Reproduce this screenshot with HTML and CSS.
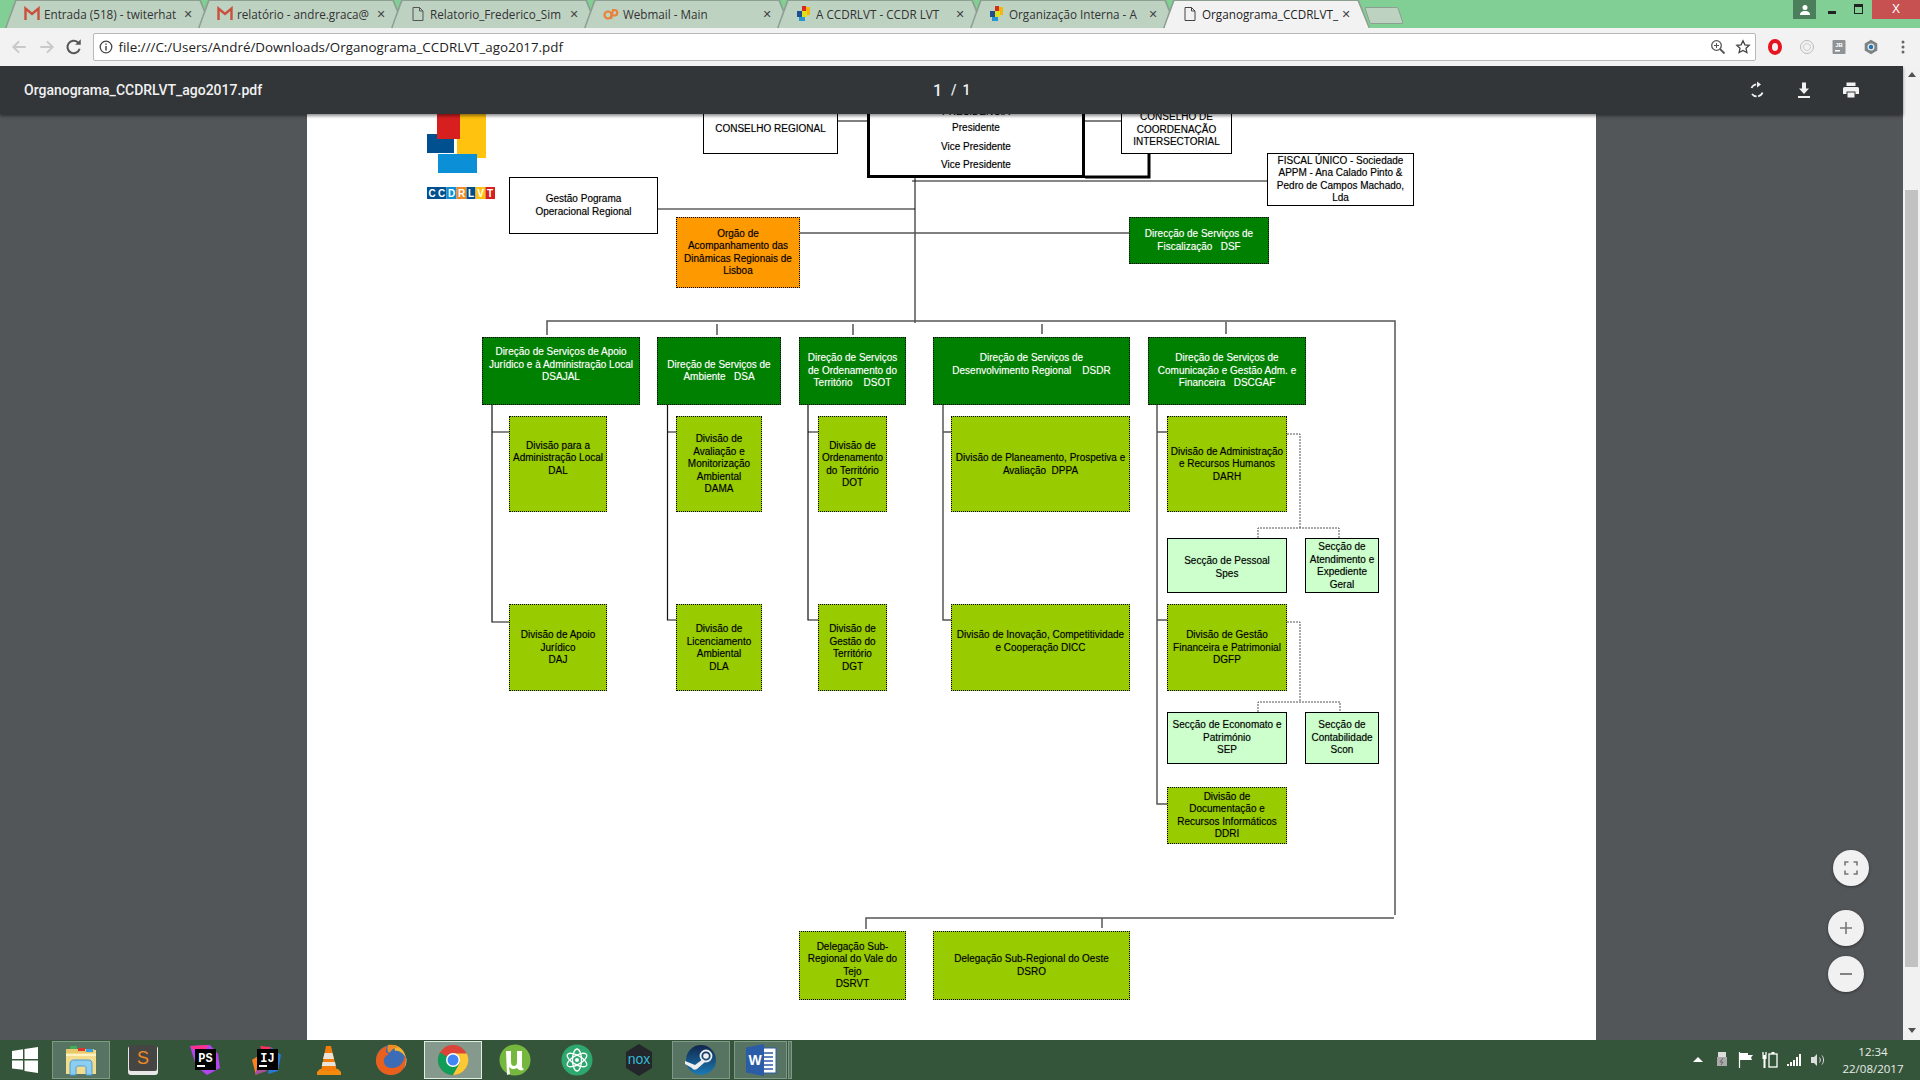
FILE: index.html
```html
<!DOCTYPE html>
<html lang="pt">
<head>
<meta charset="utf-8">
<title>Organograma_CCDRLVT_ago2017.pdf</title>
<link rel="stylesheet" href="styles.css">
</head>
<body>
<div class="app">
  <header class="tabstrip">
    <div class="tab"><svg class="fav" viewBox="0 0 16 16"><path d="M1.5 14V2.5L8 8l6.500-5.500V14" fill="none" stroke="#c9503c" stroke-width="2.400"/></svg><span class="tab-title">Entrada (518) - twiterhat</span><span class="tab-x">✕</span></div>
    <div class="tab"><svg class="fav" viewBox="0 0 16 16"><path d="M1.5 14V2.5L8 8l6.500-5.500V14" fill="none" stroke="#c9503c" stroke-width="2.400"/></svg><span class="tab-title">relatório - andre.graca@</span><span class="tab-x">✕</span></div>
    <div class="tab"><svg class="fav" viewBox="0 0 16 16"><path d="M3 1.500h6.500L13 5v9.500H3zM9.500 1.500V5H13" fill="none" stroke="#555" stroke-width="1"/></svg><span class="tab-title">Relatorio_Frederico_Sim</span><span class="tab-x">✕</span></div>
    <div class="tab"><svg class="fav" viewBox="0 0 16 16"><circle cx="5" cy="9" r="3.500" fill="none" stroke="#e8813c" stroke-width="2.200"/><path d="M8 13l2-9h1.500a2.500 2.500 0 0 1 0 5.500H10" fill="none" stroke="#e8813c" stroke-width="2.200"/></svg><span class="tab-title">Webmail - Main</span><span class="tab-x">✕</span></div>
    <div class="tab"><svg class="fav" viewBox="0 0 16 16"><rect x="6" y="0" width="4" height="5" fill="#d62a1f"/><rect x="10" y="1" width="4" height="8" fill="#f5b50f"/><rect x="1" y="5" width="5" height="6" fill="#1d4f91"/><rect x="6" y="5" width="5" height="6" fill="#dfe01c"/><rect x="3" y="11" width="6" height="4" fill="#2a95d5"/></svg><span class="tab-title">A CCDRLVT - CCDR LVT</span><span class="tab-x">✕</span></div>
    <div class="tab"><svg class="fav" viewBox="0 0 16 16"><rect x="6" y="0" width="4" height="5" fill="#d62a1f"/><rect x="10" y="1" width="4" height="8" fill="#f5b50f"/><rect x="1" y="5" width="5" height="6" fill="#1d4f91"/><rect x="6" y="5" width="5" height="6" fill="#dfe01c"/><rect x="3" y="11" width="6" height="4" fill="#2a95d5"/></svg><span class="tab-title">Organização Interna - A</span><span class="tab-x">✕</span></div>
    <div class="tab tab-active"><svg class="fav" viewBox="0 0 16 16"><path d="M3 1.500h6.500L13 5v9.500H3zM9.500 1.500V5H13" fill="none" stroke="#444" stroke-width="1"/></svg><span class="tab-title">Organograma_CCDRLVT_</span><span class="tab-x">✕</span></div>
    <div class="tab-new"></div>
    <div class="win-controls">
      <div class="win-user"><svg width="12" height="12" viewBox="0 0 12 12"><circle cx="6" cy="3.500" r="2.500" fill="#fff"/><path d="M1 11c0-3 2-4 5-4s5 1 5 4z" fill="#fff"/></svg></div>
      <div class="win-min"></div>
      <div class="win-max"></div>
      <div class="win-close">X</div>
    </div>
  </header>

  <nav class="toolbar">
    <svg class="tb-btn" viewBox="0 0 16 16"><path d="M14 8H3M8 3L3 8l5 5" fill="none" stroke="#c9c9c9" stroke-width="1.800"/></svg>
    <svg class="tb-btn" viewBox="0 0 16 16"><path d="M2 8h11M8 3l5 5-5 5" fill="none" stroke="#c9c9c9" stroke-width="1.800"/></svg>
    <svg class="tb-btn" viewBox="0 0 16 16"><path d="M13 9.500A5.500 5.500 0 1 1 11.500 4" fill="none" stroke="#555" stroke-width="1.800"/><path d="M9 6h5V1z" fill="#555"/></svg>
    <div class="urlbar">
      <svg class="url-info" viewBox="0 0 14 14"><circle cx="7" cy="7" r="5.800" fill="none" stroke="#444" stroke-width="1.300"/><path d="M7 6v4.500M7 3.500v1.300" stroke="#444" stroke-width="1.500"/></svg>
      <span class="url-text">file:///C:/Users/André/Downloads/Organograma_CCDRLVT_ago2017.pdf</span>
      <svg class="url-icon" viewBox="0 0 16 16"><circle cx="6.500" cy="6.500" r="4.800" fill="none" stroke="#555" stroke-width="1.300"/><path d="M10 10l4.500 4.500" stroke="#555" stroke-width="1.800"/><path d="M4 6.500h5M6.500 4v5" stroke="#555"/></svg>
      <svg class="url-icon" viewBox="0 0 16 16"><path d="M8 1.800l1.900 4 4.300.5-3.200 3 .9 4.300L8 11.400l-3.900 2.200.9-4.300-3.200-3 4.300-.5z" fill="none" stroke="#444" stroke-width="1.300"/></svg>
    </div>
    <div class="ext-row">
      <svg class="ext" viewBox="0 0 16 16"><ellipse cx="8" cy="8" rx="5" ry="6" fill="none" stroke="#e5141f" stroke-width="4"/></svg>
      <svg class="ext" viewBox="0 0 16 16"><circle cx="8" cy="8" r="6.500" fill="#f2f2f2" stroke="#bbb"/><circle cx="8" cy="8" r="3.500" fill="none" stroke="#ccc"/></svg>
      <svg class="ext" viewBox="0 0 16 16"><rect x="1.500" y="1" width="13" height="14" rx="1" fill="#8f9396"/><text x="8" y="7.500" class="ext-jb">JB</text><rect x="4" y="11" width="5" height="1.500" fill="#fff"/></svg>
      <svg class="ext" viewBox="0 0 16 16"><path d="M8 .8l6.300 3.600v7.200L8 15.200l-6.300-3.600V4.400z" fill="#7d8285"/><circle cx="8" cy="8" r="3.500" fill="#e8e8e8"/><circle cx="8" cy="8" r="2.200" fill="#1f73b7"/></svg>
      <svg class="ext ext-dots" viewBox="0 0 16 16"><circle cx="8" cy="3" r="1.500" fill="#666"/><circle cx="8" cy="8" r="1.500" fill="#666"/><circle cx="8" cy="13" r="1.500" fill="#666"/></svg>
    </div>
  </nav>

  <main class="main">
    <section class="viewer">
      <div class="pdf-bar">
        <div class="pdf-title">Organograma_CCDRLVT_ago2017.pdf</div>
        <div class="pdf-pages"><span class="pdf-cur">1</span><span class="pdf-sep">/</span><span class="pdf-total">1</span></div>
        <div class="pdf-actions">
          <svg class="pdf-ico" viewBox="0 0 20 20"><path d="M15.500 12.500A6 6 0 0 1 5 14M4.500 8A6 6 0 0 1 12 4.500" fill="none" stroke="#eee" stroke-width="1.800" stroke-dasharray="6 1.500"/><path d="M10 1.500v6l4-3z" fill="#eee"/></svg>
          <svg class="pdf-ico" viewBox="0 0 20 20"><path d="M8 2.500h4v6h3l-5 5.500-5-5.500h3zM4 16h12v2H4z" fill="#f1f1f1"/></svg>
          <svg class="pdf-ico" viewBox="0 0 20 20"><path d="M5.500 2.500h9V6h-9zM3.500 7h13a1.500 1.500 0 0 1 1.500 1.500V14h-3.500v-2.500h-9V14H2V8.500A1.500 1.500 0 0 1 3.500 7zM6.500 12.500h7v5h-7z" fill="#f1f1f1"/></svg>
        </div>
      </div>
      <div class="stage">
        <div class="pdf-page">
          <div class="chart">
            <svg class="wires" viewBox="307 114 1289 926" width="1289" height="926">
              <rect x="427" y="134" width="27" height="19" fill="#004f8f"/>
              <rect x="457" y="100" width="29" height="58" fill="#ffc20e"/>
              <rect x="437" y="100" width="23" height="39" fill="#d71f1f"/>
              <rect x="438" y="154" width="39" height="19" fill="#0b8fd6"/>
              <g class="logo-letters">
                <rect x="427" y="187" width="19.500" height="12" fill="#004f8f"/>
                <rect x="446.500" y="187" width="10" height="12" fill="#0b8fd6"/>
                <rect x="456.500" y="187" width="10" height="12" fill="#ef8a24"/>
                <rect x="466.500" y="187" width="9" height="12" fill="#004f8f"/>
                <rect x="475.500" y="187" width="10" height="12" fill="#ffc20e"/>
                <rect x="485.500" y="187" width="9.500" height="12" fill="#d71f1f"/>
                <text x="432" y="197">C</text><text x="441.500" y="197">C</text><text x="451.500" y="197">D</text><text x="461.500" y="197">R</text><text x="471" y="197">L</text><text x="480.500" y="197">V</text><text x="490" y="197">T</text>
              </g>
              <g class="w-grey">
                <path d="M837 121H868M1085 121H1121M915 177V323M799 233H1129"/>
                <path d="M547 335V321H1395V915M1394 918H866V929M1102 918V928M717 324V335M853 324V335M1042 324V334M1226 322V334"/>
                <path d="M1157 404V804H1167M1157 432H1167M1157 620H1167M943 404V620H951M943 432H951"/>
              </g>
              <g class="w-dark">
                <path d="M912 181H1267M657 209H915"/>
                <path d="M492 404V622H509M492 432H509M667.500 404V620H676M667.500 432H676M808 404V620H818M808 432H818"/>
              </g>
              <path class="w-thick" d="M1149 153V177H1085"/>
              <path class="w-dots" d="M1287 434H1300V528M1258 538V528H1339V538M1287 622H1300V702M1258 712V702H1340V712"/>
            </svg>

            <div class="node plain n-conselho">CONSELHO REGIONAL</div>
            <div class="node n-presid"><div><span class="presid-title">PRESIDÊNCIA</span>Presidente<br>Vice Presidente<br>Vice Presidente</div></div>
            <div class="node plain n-coord">CONSELHO DE<br>COORDENAÇÃO<br>INTERSECTORIAL</div>
            <div class="node plain n-fiscal">FISCAL ÚNICO - Sociedade<br>APPM - Ana Calado Pinto &amp;<br>Pedro de Campos Machado,<br>Lda</div>
            <div class="node plain n-gestao">Gestão Pograma<br>Operacional Regional</div>
            <div class="node orange n-orgao">Orgão de<br>Acompanhamento das<br>Dinâmicas Regionais de<br>Lisboa</div>
            <div class="node green n-dsf">Direcção de Serviços de<br>Fiscalização &nbsp; DSF</div>

            <div class="node green r-dir c-a">Direção de Serviços de Apoio<br>Jurídico e à Administração Local<br>DSAJAL<br>&nbsp;</div>
            <div class="node green r-dir c-b">Direção de Serviços de<br>Ambiente &nbsp; DSA</div>
            <div class="node green r-dir c-c">Direção de Serviços<br>de Ordenamento do<br>Território &nbsp; &nbsp;DSOT</div>
            <div class="node green r-dir c-d">Direção de Serviços de<br>Desenvolvimento Regional &nbsp; &nbsp;DSDR<br>&nbsp;</div>
            <div class="node green r-dir c-e">Direção de Serviços de<br>Comunicação e Gestão Adm. e<br>Financeira &nbsp; DSCGAF</div>

            <div class="node lime r-one d-a">Divisão para a<br>Administração Local<br>DAL<br>&nbsp;</div>
            <div class="node lime r-one d-b">Divisão de<br>Avaliação e<br>Monitorização<br>Ambiental<br>DAMA</div>
            <div class="node lime r-one d-c">Divisão de<br>Ordenamento<br>do Território<br>DOT</div>
            <div class="node lime r-one d-d">Divisão de Planeamento, Prospetiva e<br>Avaliação &nbsp;DPPA</div>
            <div class="node lime r-one d-e">Divisão de Administração<br>e Recursos Humanos<br>DARH</div>

            <div class="node section r-sec1 d-e n-spes">Secção de Pessoal<br>Spes</div>
            <div class="node section r-sec1 d-f">Secção de<br>Atendimento e<br>Expediente<br>Geral</div>

            <div class="node lime r-two d-a">Divisão de Apoio<br>Jurídico<br>DAJ</div>
            <div class="node lime r-two d-b">Divisão de<br>Licenciamento<br>Ambiental<br>DLA</div>
            <div class="node lime r-two d-c">Divisão de<br>Gestão do<br>Território<br>DGT</div>
            <div class="node lime r-two d-d">Divisão de Inovação, Competitividade<br>e Cooperação DICC<br>&nbsp;</div>
            <div class="node lime r-two d-e">Divisão de Gestão<br>Financeira e Patrimonial<br>DGFP</div>

            <div class="node section r-sec2 d-e">Secção de Economato e<br>Património<br>SEP</div>
            <div class="node section r-sec2 d-f">Secção de<br>Contabilidade<br>Scon</div>

            <div class="node lime r-ddri d-e">Divisão de<br>Documentação e<br>Recursos Informáticos<br>DDRI</div>

            <div class="node lime r-del c-c">Delegação Sub-<br>Regional do Vale do<br>Tejo<br>DSRVT</div>
            <div class="node lime r-del c-d">Delegação Sub-Regional do Oeste<br>DSRO</div>
          </div>
        </div>
        <button class="fab fab-fit"><svg width="14" height="14" viewBox="0 0 14 14"><path d="M1 4.500V1h3.500M9.500 1H13v3.500M13 9.500V13H9.500M4.500 13H1V9.500" fill="none" stroke="#777" stroke-width="1.600"/></svg></button>
        <button class="fab fab-plus"><svg width="14" height="14" viewBox="0 0 14 14"><path d="M7 1v12M1 7h12" stroke="#777" stroke-width="1.600"/></svg></button>
        <button class="fab fab-minus"><svg width="14" height="14" viewBox="0 0 14 14"><path d="M1 7h12" stroke="#777" stroke-width="1.800"/></svg></button>
      </div>
    </section>
    <aside class="scrollbar">
      <div class="sb-up"></div>
      <div class="sb-thumb"></div>
      <div class="sb-down"></div>
    </aside>
  </main>

  <footer class="taskbar">
    <div class="start"><svg width="26" height="26" viewBox="0 0 26 26"><path d="M0 4l11-1.800V12H0zM12.500 2L26 0v12H12.500zM0 13.500h11v9.300L0 21.500zM12.500 13.500H26V26l-13.500-2z" fill="#fff"/></svg></div>
    <div class="apps">
      <div class="app-item open"><svg class="app-ico" viewBox="0 0 32 32"><path d="M1 6h30v24H1z" fill="#f4dc8e"/><path d="M1 5h28v4H1z" fill="#e8c869"/><rect x="5" y="2" width="7" height="3" fill="#3fae5b"/><rect x="13" y="4" width="7" height="3" fill="#d33"/><rect x="21" y="5" width="7" height="3" fill="#37a0e6"/><path d="M1 11h30" stroke="#fff3c4" stroke-width="2"/><path d="M5 31V20c0-3 2-4 4-4h14c3 0 4 1 4 4v11h-6v-7c0-1-1-2-2-2h-6c-1 0-2 1-2 2v7z" fill="#8ccdf0" stroke="#4a9cd0"/></svg></div>
      <div class="app-item"><svg class="app-ico" viewBox="0 0 32 32"><rect x="1" y="2" width="30" height="29" rx="3" fill="#e8e8e8"/><rect x="2" y="1" width="28" height="26" rx="2" fill="#454543"/><text x="16" y="20" class="ico-sublime">S</text></svg></div>
      <div class="app-item"><svg class="app-ico" viewBox="0 0 32 32"><path d="M1 2l20-1 8 9 2 14-13 7-11-9z" fill="#b345f1"/><path d="M1 2l18-1-6 12z" fill="#ff318c"/><rect x="6" y="5" width="21" height="21" fill="#000"/><text x="16.500" y="18" class="ico-jb">PS</text><rect x="8" y="21" width="8" height="2" fill="#fff"/></svg></div>
      <div class="app-item"><svg class="app-ico" viewBox="0 0 32 32"><path d="M20 3l10 8-3 16-10 3z" fill="#2979d9"/><path d="M9 2l11 1-5 12z" fill="#fe315d"/><path d="M1 16l6-4 5 13-7 6z" fill="#fc801d"/><path d="M4 31l12-4-8-10z" fill="#a94f9a"/><rect x="6" y="5" width="21" height="21" fill="#000"/><text x="16.500" y="18" class="ico-jb">IJ</text><rect x="8" y="21" width="8" height="2" fill="#fff"/></svg></div>
      <div class="app-item"><svg class="app-ico" viewBox="0 0 32 32"><path d="M4 31v-3l3-3h18l3 3v3z" fill="#f28b0e"/><path d="M13 2h5l6 25H8z" fill="#f47d0a"/><path d="M11.500 9h8l1.500 6H10zM9.500 18h12.500l.8 4H8.800z" fill="#e9e3d8"/></svg></div>
      <div class="app-item"><svg class="app-ico" viewBox="0 0 32 32"><circle cx="16" cy="16" r="15" fill="#3b6cb5"/><path d="M19 1C25 2 30 7 31 14 28 9 24 6 20 7z" fill="#f7b32b"/><path d="M31 13c1 3 .5 8-2 11 1-4 1-8 2-11z" fill="#e8e4d0"/><path d="M12 2C5 4 1 10 1 17c0 8 7 14 15 14s15-6 15-15l-1-5c-1 6-4 13-13 13-6 0-9-4-8-9 1-3 4-4 5-5-3-1-4-3-2-8z" fill="#e8601c"/><path d="M13 1c4-1 9 0 12 3-3-1-6 0-8 2l-3 3c-2-2-2-5-1-8z" fill="#f08a24"/></svg></div>
      <div class="app-item open active"><svg class="app-ico" viewBox="0 0 32 32"><circle cx="16" cy="16" r="15" fill="#db4437"/><path d="M16 16L3 8.500A15 15 0 0 0 16 31l7.500-13z" fill="#109d58"/><path d="M16 9.500h13.800A15 15 0 0 1 16 31l7-12.500z" fill="#fcc934"/><circle cx="16" cy="16" r="7" fill="#fff"/><circle cx="16" cy="16" r="5.500" fill="#4285f4"/></svg></div>
      <div class="app-item"><svg class="app-ico" viewBox="0 0 32 32"><circle cx="16" cy="16" r="15.500" fill="#76b83f"/><path d="M7 7h5v11c0 3 1.500 4 3 4s3-1 3-4V7h5v15c0 2 1 3 2 3-1 2-5 2-7-1-3 2-6 1-8-1l1 7-3 1z" fill="#fff"/></svg></div>
      <div class="app-item"><svg class="app-ico" viewBox="0 0 32 32"><circle cx="16" cy="16" r="15.500" fill="#2fa870"/><g fill="none" stroke="#fff" stroke-width="1.300"><ellipse cx="16" cy="16" rx="4.500" ry="11"/><ellipse cx="16" cy="16" rx="4.500" ry="11" transform="rotate(60 16 16)"/><ellipse cx="16" cy="16" rx="4.500" ry="11" transform="rotate(120 16 16)"/></g><circle cx="16" cy="16" r="2" fill="#fff"/></svg></div>
      <div class="app-item"><svg class="app-ico" viewBox="0 0 32 32"><path d="M16 0l13 8v16l-13 8-13-8V8z" fill="#23262b"/><text x="16" y="20" class="ico-nox">nox</text></svg></div>
      <div class="app-item open"><svg class="app-ico" viewBox="0 0 32 32"><defs><linearGradient id="steamg" x1="0" y1="0" x2="0" y2="1"><stop offset="0" stop-color="#10264c"/><stop offset="1" stop-color="#1b7bb5"/></linearGradient></defs><circle cx="16" cy="16" r="15" fill="url(#steamg)"/><circle cx="21" cy="12" r="5.500" fill="none" stroke="#eee" stroke-width="1.800"/><circle cx="21" cy="12" r="2.800" fill="#eee"/><path d="M0 17l10 4 8-6 2 3-8 7c-2 1-4 1-5-1L0 20z" fill="#eee"/></svg></div>
      <div class="app-item open word"><svg class="app-ico" viewBox="0 0 32 32"><rect x="13" y="4" width="18" height="25" fill="#fff" stroke="#2b5ca8"/><path d="M17 9h11M17 13h11M17 17h11M17 21h11M17 25h11" stroke="#2b5ca8" stroke-width="1.600"/><path d="M1 3.500L19 0v32L1 28.500z" fill="#2b5ca8"/><text x="10" y="21" class="ico-word">W</text></svg></div>
      <div class="app-sliver"></div>
    </div>
    <div class="tray">
      <svg class="tray-ico" viewBox="0 0 16 16"><path d="M8 5l5 5H3z" fill="#fff"/></svg>
      <svg class="tray-ico" viewBox="0 0 16 16"><rect x="4" y="0" width="8" height="5" fill="#ddd"/><rect x="3" y="5" width="10" height="9" fill="#aaa"/><path d="M9 6l-3 4h3l-2 3" stroke="#666" fill="none"/></svg>
      <svg class="tray-ico" viewBox="0 0 16 16"><path d="M1.500 0v16" stroke="#fff" stroke-width="1.200"/><path d="M2 1h8v7H2zM10 3h5l-2 2.500L14 8h-4z" fill="#fff"/></svg>
      <svg class="tray-ico" viewBox="0 0 16 16"><path d="M1 0v3M4 0v3" stroke="#fff" stroke-width="1.300"/><path d="M.5 3h4v4h-1v9h-2V7h-1z" fill="#fff"/><rect x="7" y="2" width="8" height="13" fill="none" stroke="#fff" stroke-width="1.300"/><rect x="9.500" y="0" width="3" height="2" fill="#fff"/></svg>
      <svg class="tray-ico" viewBox="0 0 16 16"><path d="M1 12h2v2H1zM4 10h2v4H4zM7 8h2v6H7zM10 5h2v9h-2zM13 2h2v12h-2z" fill="#fff"/></svg>
      <svg class="tray-ico" viewBox="0 0 16 16"><path d="M1 5h3l3-3v12l-3-3H1z" fill="#ddd"/><path d="M9.500 5.500c1 1.500 1 3.500 0 5M12 3.500c2 2.500 2 6.500 0 9" fill="none" stroke="#ddd"/></svg>
    </div>
    <div class="clock">12:34<br>22/08/2017</div>
  </footer>
</div>
</body>
</html>
```

FILE: styles.css
```css
* { box-sizing: border-box; }
html, body { margin: 0; height: 100%; overflow: hidden; }
body { font-family: "Open Sans", "Liberation Sans", sans-serif; }
svg { display: block; flex: none; }

.app { display: flex; flex-direction: column; width: 1920px; height: 1080px; }

/* tab strip */
.tabstrip { height: 28px; flex: none; display: flex; padding-left: 5px; background: #82cf95; position: relative; }
.tab { position: relative; width: 207px; height: 28px; margin-right: -14px; padding: 0 0 0 19px; display: flex; align-items: center; font-size: 11.700px; color: #333; }
.tab::before, .tab::after { content: ""; position: absolute; top: 0; bottom: 0; left: 0; right: 0; clip-path: polygon(0 100%, 10px 0, calc(100% - 11px) 0, 100% 100%); }
.tab::before { background: #8d9f90; }
.tab::after { background: #bed2c2; top: 1px; left: 1.500px; right: 1.500px; }
.tab > * { position: relative; z-index: 1; }
.tab-active { z-index: 2; color: #222; }
.tab-active::after { background: #f2f2f2; bottom: 0; }
.fav { width: 16px; height: 16px; margin-right: 4px; }
.tab-title { width: 136px; white-space: nowrap; }
.tab-x { width: 16px; font-size: 11px; text-align: center; color: #444; font-family: "DejaVu Sans", sans-serif; }
.tab-new { width: 34px; height: 17px; margin: 7px 0 0 11px; background: #bed2c2; border: 1px solid #8d9f90; transform: skewX(18deg); border-radius: 2px; }
.win-controls { position: absolute; top: 0; right: 0; height: 19px; display: flex; }
.win-user { position: absolute; right: 104px; width: 23px; height: 19px; background: #4b7e5a; display: flex; align-items: center; justify-content: center; }
.win-min { width: 8px; height: 3px; background: #222; margin: 11px 18px 0 0; }
.win-max { width: 9px; height: 10px; border: 1.500px solid #222; border-top-width: 3px; margin: 4px 9px 0 0; }
.win-close { width: 48px; height: 19px; background: #c75050; color: #fff; font-size: 12px; line-height: 19px; text-align: center; font-family: "Liberation Sans", sans-serif; }

/* browser toolbar */
.toolbar { height: 38px; flex: none; background: #f2f2f2; display: flex; align-items: center; position: relative; z-index: 3; padding-left: 10px; }
.tb-btn { width: 18px; height: 18px; margin-right: 9.500px; }
.urlbar { width: 1663px; height: 28px; background: #fff; border: 1px solid #b8b8b8; border-radius: 2px; display: flex; align-items: center; padding-left: 5px; padding-right: 4px; }
.url-info { width: 14px; height: 14px; margin-right: 6px; }
.url-text { font-size: 13.360px; color: #222; flex: 1; white-space: nowrap; }
.url-icon { width: 16px; height: 16px; margin-left: 9px; }
.ext-row { display: flex; align-items: center; margin-left: 11px; gap: 16px; }
.ext { width: 16px; height: 16px; }
.ext-jb { font: bold 6px "Liberation Sans", sans-serif; fill: #fff; text-anchor: middle; }

/* main */
.main { flex: 1; display: flex; min-height: 0; }
.viewer { flex: 1; display: flex; flex-direction: column; background: #525659; min-width: 0; }
.pdf-bar { height: 48px; flex: none; background: #323639; color: #f1f1f1; display: flex; align-items: center; padding-left: 24px; position: relative; z-index: 2; box-shadow: 0 2px 3px rgba(0,0,0,.45); }
.pdf-title { width: 700px; font-family: Roboto, sans-serif; font-size: 14px; font-weight: 500; white-space: nowrap; }
.pdf-pages { position: absolute; left: 933px; top: 0; height: 48px; display: flex; align-items: center; font-family: Roboto, sans-serif; font-size: 14px; font-weight: 500; }
.pdf-cur { font-size: 16px; margin-right: 9px; }
.pdf-sep { margin-right: 6px; }
.pdf-actions { position: absolute; left: 1747px; top: 14px; display: flex; gap: 27px; }
.pdf-ico { width: 20px; height: 20px; }

.stage { flex: 1; position: relative; display: flex; justify-content: center; min-height: 0; overflow: hidden; }
.pdf-page { width: 1289px; height: 926px; background: #fff; position: relative; overflow: hidden; }
.chart { position: relative; width: 1289px; height: 926px; }
.wires { position: absolute; left: 0; top: 0; }
.wires path { fill: none; }
.w-grey path { stroke: #555; stroke-width: 1.500; }
.w-dark path { stroke: #111; stroke-width: 1.200; }
.w-thick { stroke: #000; stroke-width: 3; }
.w-dots { stroke: #555; stroke-width: 1; stroke-dasharray: 2 1; }
.logo-letters text { font: bold 10px "Liberation Sans", sans-serif; fill: #fff; text-anchor: middle; }

/* chart nodes: free diagram canvas */
.node { position: absolute; display: flex; align-items: center; justify-content: center; text-align: center; font-family: "Liberation Sans", Arial, sans-serif; font-size: 10px; line-height: 12.500px; color: #000; text-shadow: 0 0 1px rgba(0,0,0,.35); }
.plain { background: #fff; border: 1px solid #000; }
.green { background: #008000; color: #fff; border: 1px dotted #000; text-shadow: 0 0 1px rgba(255,255,255,.4); }
.lime { background: #99cc00; border: 1px dotted #000; padding-top: 1px; }
.orange { background: #ff9900; border: 1px dotted #000; }
.section { background: #ccffcc; border: 1px solid #000; padding-top: 1px; }

.n-conselho { left: 396px; top: -11px; width: 135px; height: 51px; padding-top: 2px; }
.n-presid { left: 560px; top: -12px; width: 218px; height: 76px; line-height: 18.500px; background: #fff; border: 3px solid #000; align-items: flex-start; }
.presid-title { display: block; line-height: 14px; }
.n-coord { left: 814px; top: -10px; width: 111px; height: 50px; padding-top: 2px; }
.n-fiscal { left: 960px; top: 39px; width: 147px; height: 53px; }
.n-gestao { left: 202px; top: 63px; width: 149px; height: 57px; }
.n-orgao { left: 369px; top: 103px; width: 124px; height: 71px; }
.n-dsf { left: 822px; top: 103px; width: 140px; height: 47px; }
.n-spes { padding-top: 4px; }

.r-dir { top: 223px; height: 68px; }
.r-one { top: 302px; height: 96px; }
.r-two { top: 490px; height: 87px; }
.r-sec1 { top: 424px; height: 55px; }
.r-sec2 { top: 598px; height: 52px; padding-top: 0; }
.r-ddri { top: 673px; height: 57px; padding-top: 0; }
.r-del { top: 817px; height: 69px; padding-top: 0; }

.c-a { left: 175px; width: 158px; }
.c-b { left: 350px; width: 124px; }
.c-c { left: 492px; width: 107px; }
.c-d { left: 626px; width: 197px; }
.c-e { left: 841px; width: 158px; }

.d-a { left: 202px; width: 98px; }
.d-b { left: 369px; width: 86px; }
.d-c { left: 511px; width: 69px; }
.d-d { left: 644px; width: 179px; }
.d-e { left: 860px; width: 120px; }
.d-f { left: 998px; width: 74px; }

.fab { position: absolute; width: 36px; height: 36px; padding: 0; border: 0; border-radius: 50%; background: #f1f1f1; box-shadow: 0 1px 3px rgba(0,0,0,.4); display: flex; align-items: center; justify-content: center; }
.fab-fit { left: 1833px; top: 736px; }
.fab-plus { left: 1828px; top: 796px; }
.fab-minus { left: 1828px; top: 842px; }

/* scrollbar */
.scrollbar { width: 17px; flex: none; background: #f1f1f1; display: flex; flex-direction: column; align-items: center; position: relative; }
.sb-up { width: 0; height: 0; margin-top: 6px; border: 4px solid transparent; border-top: 0; border-bottom: 5px solid #505050; }
.sb-thumb { width: 13px; height: 777px; margin-top: 113px; background: #c1c1c1; }
.sb-down { width: 0; height: 0; margin-top: 61px; border: 4px solid transparent; border-bottom: 0; border-top: 5px solid #505050; }

/* taskbar */
.taskbar { height: 40px; flex: none; background: #35553b; display: flex; align-items: center; position: relative; z-index: 4; color: #eee; }
.start { width: 52px; height: 40px; display: flex; align-items: center; justify-content: center; flex: none; padding-right: 2px; }
.apps { display: flex; gap: 4px; height: 38px; align-items: stretch; }
.app-item { width: 58px; display: flex; align-items: center; justify-content: center; }
.app-item.open { background: #567461; border: 1px solid #7f9988; }
.app-item.active { background: #85998c; border: 1.500px solid #e3ebe5; }
.app-item.word { width: 53px; }
.app-sliver { width: 4px; margin-left: -3px; background: #567461; border: 1px solid #7f9988; }
.app-ico { width: 32px; height: 32px; }
.ico-sublime { font: 18px "Liberation Sans", sans-serif; fill: #f08a24; text-anchor: middle; }
.ico-jb { font: bold 12px "Liberation Mono", monospace; fill: #fff; text-anchor: middle; }
.ico-nox { font: 14px "Liberation Sans", sans-serif; fill: #35b8d6; text-anchor: middle; }
.ico-word { font: bold 14px "Liberation Sans", sans-serif; fill: #fff; text-anchor: middle; }
.tray { margin-left: auto; display: flex; gap: 8px; align-items: center; margin-right: 1px; }
.tray-ico { width: 16px; height: 16px; }
.clock { width: 92px; margin: 0 1px 0 0; text-align: center; font-size: 11.500px; line-height: 17px; color: #e8eee9; }
```
